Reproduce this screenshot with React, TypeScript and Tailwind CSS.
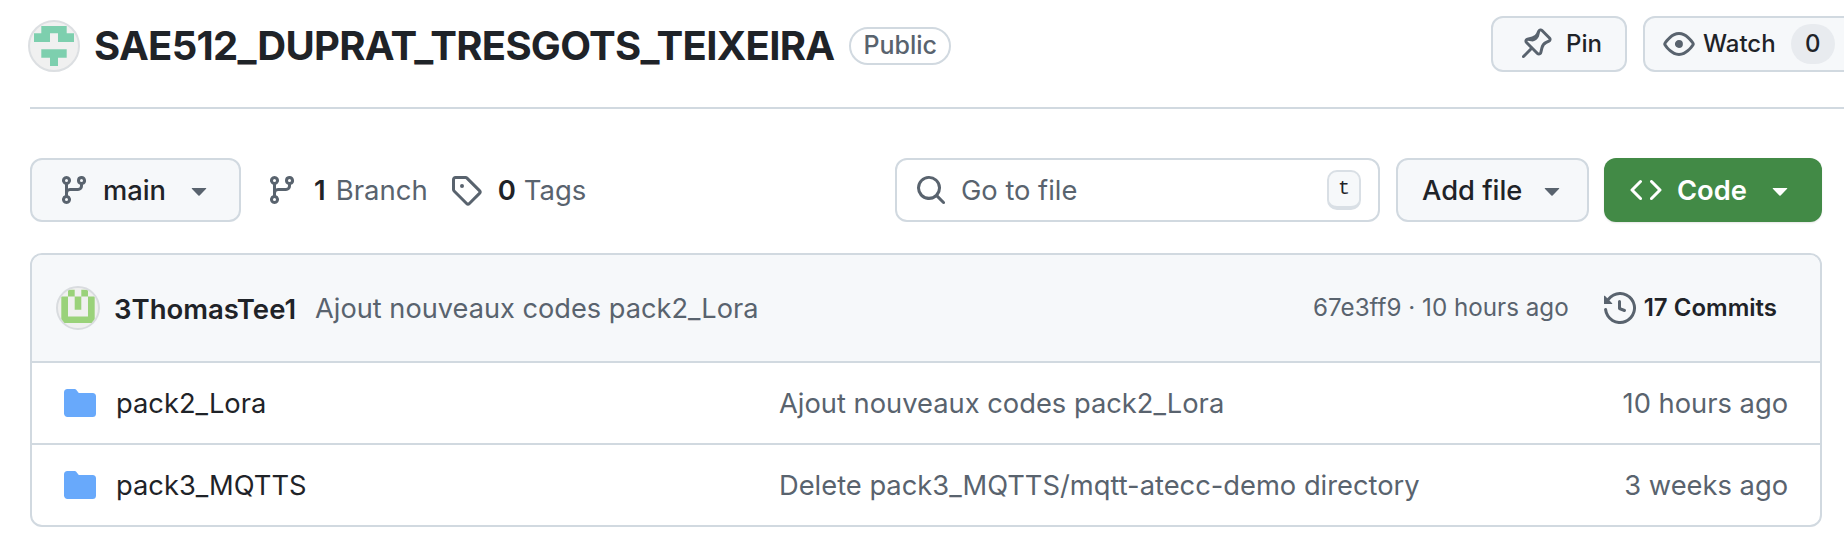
import React from 'react';

const PATHS = {
  branch: 'M9.5 3.25a2.25 2.25 0 1 1 3 2.122V6A2.5 2.5 0 0 1 10 8.5H6a1 1 0 0 0-1 1v1.128a2.251 2.251 0 1 1-1.5 0V5.372a2.25 2.25 0 1 1 1.5 0v1.836A2.493 2.493 0 0 1 6 7h4a1 1 0 0 0 1-1v-.628A2.25 2.25 0 0 1 9.5 3.25Zm-6 0a.75.75 0 1 0 1.5 0 .75.75 0 0 0-1.5 0Zm8.25-.75a.75.75 0 1 0 0 1.5.75.75 0 0 0 0-1.5ZM4.25 12a.75.75 0 1 0 0 1.5.75.75 0 0 0 0-1.5Z',
  tag: 'M1 7.775V2.75C1 1.784 1.784 1 2.75 1h5.025c.464 0 .91.184 1.238.513l6.25 6.25a1.75 1.75 0 0 1 0 2.474l-5.026 5.026a1.75 1.75 0 0 1-2.474 0l-6.25-6.25A1.752 1.752 0 0 1 1 7.775Zm1.5 0c0 .066.026.13.073.177l6.25 6.25a.25.25 0 0 0 .354 0l5.025-5.025a.25.25 0 0 0 0-.354l-6.25-6.25a.25.25 0 0 0-.177-.073H2.75a.25.25 0 0 0-.25.25ZM6 5a1 1 0 1 1 0 2 1 1 0 0 1 0-2Z',
  pin: 'M4.456.734a1.75 1.75 0 0 1 2.826.504l.613 1.327a3.081 3.081 0 0 0 2.084 1.707l2.454.584c1.332.317 1.8 1.972.832 2.94L11.06 10l3.72 3.72a.749.749 0 0 1-.326 1.275.749.749 0 0 1-.734-.215L10 11.06l-2.204 2.205c-.968.968-2.623.5-2.94-.832l-.584-2.454a3.081 3.081 0 0 0-1.707-2.084l-1.327-.613a1.75 1.75 0 0 1-.504-2.826L4.456.734ZM5.92 1.866a.25.25 0 0 0-.404-.072L1.794 5.516a.25.25 0 0 0 .072.404l1.328.613A4.582 4.582 0 0 1 5.73 9.63l.584 2.454a.25.25 0 0 0 .42.12l5.47-5.47a.25.25 0 0 0-.12-.42L9.63 6.73a4.581 4.581 0 0 1-3.098-2.537Z',
  eye: 'M8 2c1.981 0 3.671.992 4.933 2.078 1.27 1.091 2.187 2.345 2.637 3.023a1.62 1.62 0 0 1 0 1.798c-.45.678-1.367 1.932-2.637 3.023C11.67 13.008 9.981 14 8 14c-1.981 0-3.671-.992-4.933-2.078C1.797 10.83.88 9.576.43 8.898a1.62 1.62 0 0 1 0-1.798c.45-.677 1.367-1.931 2.637-3.022C4.33 2.992 6.019 2 8 2ZM1.679 7.932a.12.12 0 0 0 0 .136c.411.622 1.241 1.75 2.366 2.717C5.176 11.758 6.527 12.5 8 12.5c1.473 0 2.825-.742 3.955-1.715 1.124-.967 1.954-2.096 2.366-2.717a.12.12 0 0 0 0-.136c-.412-.621-1.242-1.75-2.366-2.717C10.824 4.242 9.473 3.5 8 3.5c-1.473 0-2.825.742-3.955 1.715-1.124.967-1.954 2.096-2.366 2.717ZM8 10a2 2 0 1 1-.001-3.999A2 2 0 0 1 8 10Z',
  search: 'M10.68 11.74a6 6 0 0 1-7.922-8.982 6 6 0 0 1 8.982 7.922l3.04 3.04a.749.749 0 0 1-.326 1.275.749.749 0 0 1-.734-.215ZM11.5 7a4.499 4.499 0 1 0-8.997 0A4.499 4.499 0 0 0 11.5 7Z',
  code: 'm11.28 3.22 4.25 4.25a.75.75 0 0 1 0 1.06l-4.25 4.25a.749.749 0 0 1-1.275-.326.749.749 0 0 1 .215-.734L13.94 8l-3.72-3.72a.749.749 0 0 1 .326-1.275.749.749 0 0 1 .734.215Zm-6.56 0a.751.751 0 0 1 1.042.018.751.751 0 0 1 .018 1.042L2.06 8l3.72 3.72a.749.749 0 0 1-.326 1.275.749.749 0 0 1-.734-.215L.47 8.53a.75.75 0 0 1 0-1.06Z',
  caret: 'm4.427 7.427 3.396 3.396a.25.25 0 0 0 .354 0l3.396-3.396A.25.25 0 0 0 11.396 7H4.604a.25.25 0 0 0-.177.427Z',
  history: 'm.427 1.927 1.215 1.215a8.002 8.002 0 1 1-1.6 5.685.75.75 0 1 1 1.493-.154 6.5 6.5 0 1 0 1.18-4.458l1.358 1.358A.25.25 0 0 1 3.896 6H.25A.25.25 0 0 1 0 5.75V2.104a.25.25 0 0 1 .427-.177ZM7.75 4a.75.75 0 0 1 .75.75v2.992l2.028.812a.75.75 0 0 1-.557 1.392l-2.5-1A.751.751 0 0 1 7 8.25v-3.5A.75.75 0 0 1 7.75 4Z',
  folder: 'M1.75 1A1.75 1.75 0 0 0 0 2.75v10.5C0 14.216.784 15 1.75 15h12.5A1.75 1.75 0 0 0 16 13.25v-8.5A1.75 1.75 0 0 0 14.25 3H7.5a.25.25 0 0 1-.2-.1l-.9-1.2C6.07 1.26 5.55 1 5 1H1.75Z',
};

const Octicon: React.FC<{ name: keyof typeof PATHS; className?: string }> = ({ name, className }) => (
  <svg viewBox="0 0 16 16" fill="currentColor" className={className}>
    <path d={PATHS[name]} />
  </svg>
);

const btn = 'flex items-center shrink-0 rounded-xl border-2 border-[#d1d9e0] bg-[#f6f8fa] text-[#1f2328] font-medium';

// identicons, drawn on their pixel grid
const RepoAvatar = () => (
  <div className="w-[52px] h-[52px] shrink-0 -ml-[2px] rounded-full border-2 border-[#dcdfe2] bg-[#f0f0f0] overflow-hidden">
    <svg viewBox="0 0 48 48" className="w-full h-full">
      <path d="M11.3 4h25.4v7.3H44V20H28v-8.7h-8V20H4v-8.7h7.3zM11.3 27.3h25.4v8.4H28V44h-8v-8.3h-8.7z" fill="#7dcfae" />
    </svg>
  </div>
);

const UserAvatar = () => (
  <div className="w-[44px] h-[44px] shrink-0 -ml-[1px] rounded-full border-2 border-[#d9dcdf] bg-[#f0f0f0] overflow-hidden">
    <svg viewBox="0 0 40 40" className="w-full h-full">
      <path d="M10 1.7h6.7v6.7H10zM23.3 1.7H30v6.7h-6.7zM16.7 8.4h6.6v13.3h-6.6zM3.3 8.4H10v20h20v-20h6.7V35H3.3z" fill="#9ad27a" />
    </svg>
  </div>
);

const Row: React.FC<{ name: string; message: string; date: string }> = ({ name, message, date }) => (
  <div className="flex items-center h-[82px] border-t-2 border-[#d1d9e0] pl-[32px] pr-[32px] text-[27.3px]">
    <Octicon name="folder" className="w-[32px] h-[32px] text-[#68a9fb] shrink-0" />
    <span className="mt-[2px] ml-[20px] w-[663px] shrink-0 text-[#1f2328]">{name}</span>
    <span className="mt-[2px] text-[#59636e]">{message}</span>
    <span className="mt-[2px] ml-auto text-[#59636e]">{date}</span>
  </div>
);

export default function App() {
  return (
    <div className="w-[1844px] h-[548px] overflow-hidden bg-white pl-[30px] text-[#1f2328] [font-family:Inter,'Liberation_Sans',sans-serif]">
      {/* repo title bar, runs past the right edge of the window */}
      <div className="w-[1830px] h-[109px] border-b-2 border-[#d1d9e0]">
        <div className="flex items-center h-[88px] w-full">
          <div className="flex items-center mt-[4px]">
            <RepoAvatar />
            <h1 className="ml-[14px] text-[40px] font-bold tracking-[-0.7px] whitespace-nowrap">SAE512_DUPRAT_TRESGOTS_TEIXEIRA</h1>
            <span className="ml-[15px] h-[38px] px-[12px] flex items-center rounded-full border-2 border-[#d1d9e0] text-[25px] font-medium text-[#59636e]">Public</span>
          </div>
          <div className="ml-auto flex items-center gap-[16px]">
            <button className={btn + ' w-[136px] h-[56px] pl-[27px] gap-[14px] text-[24px]'}>
              <Octicon name="pin" className="w-[32px] h-[32px] text-[#59636e] -scale-x-100" />
              Pin
            </button>
            <button className={btn + ' w-[217px] h-[56px] pl-[18px] gap-[8px] text-[24px]'}>
              <Octicon name="eye" className="w-[32px] h-[32px] text-[#59636e]" />
              Watch
              <span className="ml-[7px] w-[44px] h-[40px] rounded-full bg-[#e8ebef] flex items-center justify-center">0</span>
            </button>
          </div>
        </div>
      </div>

      <div className="w-[1792px]">
        {/* branch + search toolbar */}
        <div className="flex items-center mt-[49px] h-[64px]">
          <button className={btn + ' w-[211px] h-[64px] pl-[26px] text-[27.3px]'}>
            <Octicon name="branch" className="w-[32px] h-[32px] text-[#59636e]" />
            <span className="mt-[2px] ml-[13px]">main</span>
            <Octicon name="caret" className="ml-[17px] w-[32px] h-[32px] text-[#59636e]" />
          </button>
          <Octicon name="branch" className="ml-[25px] w-[32px] h-[32px] text-[#59636e] shrink-0" />
          <span className="mt-[2px] ml-[16px] text-[27.5px] font-semibold">1</span>
          <span className="mt-[2px] ml-[10px] text-[27.5px] text-[#59636e]">Branch</span>
          <Octicon name="tag" className="ml-[22px] w-[32px] h-[32px] text-[#59636e] shrink-0" />
          <span className="mt-[2px] ml-[16px] text-[27.5px] font-semibold">0</span>
          <span className="mt-[2px] ml-[8px] text-[27.5px] text-[#59636e]">Tags</span>

          <div className="ml-auto flex items-center w-[485px] h-[64px] rounded-xl border-2 border-[#d1d9e0] pl-[18px] pr-[17px]">
            <Octicon name="search" className="w-[32px] h-[32px] text-[#59636e]" />
            <span className="mt-[2px] ml-[14px] text-[27.3px] text-[#59636e]">Go to file</span>
            <kbd className="ml-auto w-[34px] h-[40px] flex items-center justify-center rounded-[10px] border-2 border-[#d9dfe5] border-b-4 bg-[#f6f8fa] text-[20px] [font-family:'Liberation_Mono',monospace]">t</kbd>
          </div>
          <button className={btn + ' ml-[16px] w-[193px] h-[64px] pl-[24px] text-[27.3px]'}>
            <span className="mt-[2px]">Add file</span>
            <Octicon name="caret" className="ml-[14px] w-[32px] h-[32px] text-[#59636e]" />
          </button>
          <button className="ml-[15px] flex items-center shrink-0 w-[218px] h-[64px] rounded-xl bg-[#428a46] pl-[26px] text-[27.3px] font-semibold text-white shadow-[0_1px_2px_rgba(0,0,0,0.1)]">
            <Octicon name="code" className="w-[32px] h-[32px]" />
            <span className="mt-[2px] ml-[15px]">Code</span>
            <Octicon name="caret" className="ml-[17px] w-[32px] h-[32px]" />
          </button>
        </div>

        {/* file table */}
        <div className="mt-[31px] rounded-xl border-2 border-[#d1d9e0] overflow-hidden">
          <div className="flex items-center h-[106px] bg-[#f6f8fa] pl-[25px] pr-[43px]">
            <UserAvatar />
            <span className="mt-[3px] ml-[14px] text-[27.5px] font-semibold">3ThomasTee1</span>
            <span className="mt-[3px] ml-[19px] text-[27.2px] text-[#59636e]">Ajout nouveaux codes pack2_Lora</span>
            <span className="ml-auto text-[24.2px] text-[#59636e]">67e3ff9 · 10 hours ago</span>
            <Octicon name="history" className="ml-[35px] w-[32px] h-[32px] text-[#59636e]" />
            <span className="ml-[8px] text-[24px] font-semibold">17 Commits</span>
          </div>
          <Row name="pack2_Lora" message="Ajout nouveaux codes pack2_Lora" date="10 hours ago" />
          <Row name="pack3_MQTTS" message="Delete pack3_MQTTS/mqtt-atecc-demo directory" date="3 weeks ago" />
        </div>
      </div>
    </div>
  );
}
